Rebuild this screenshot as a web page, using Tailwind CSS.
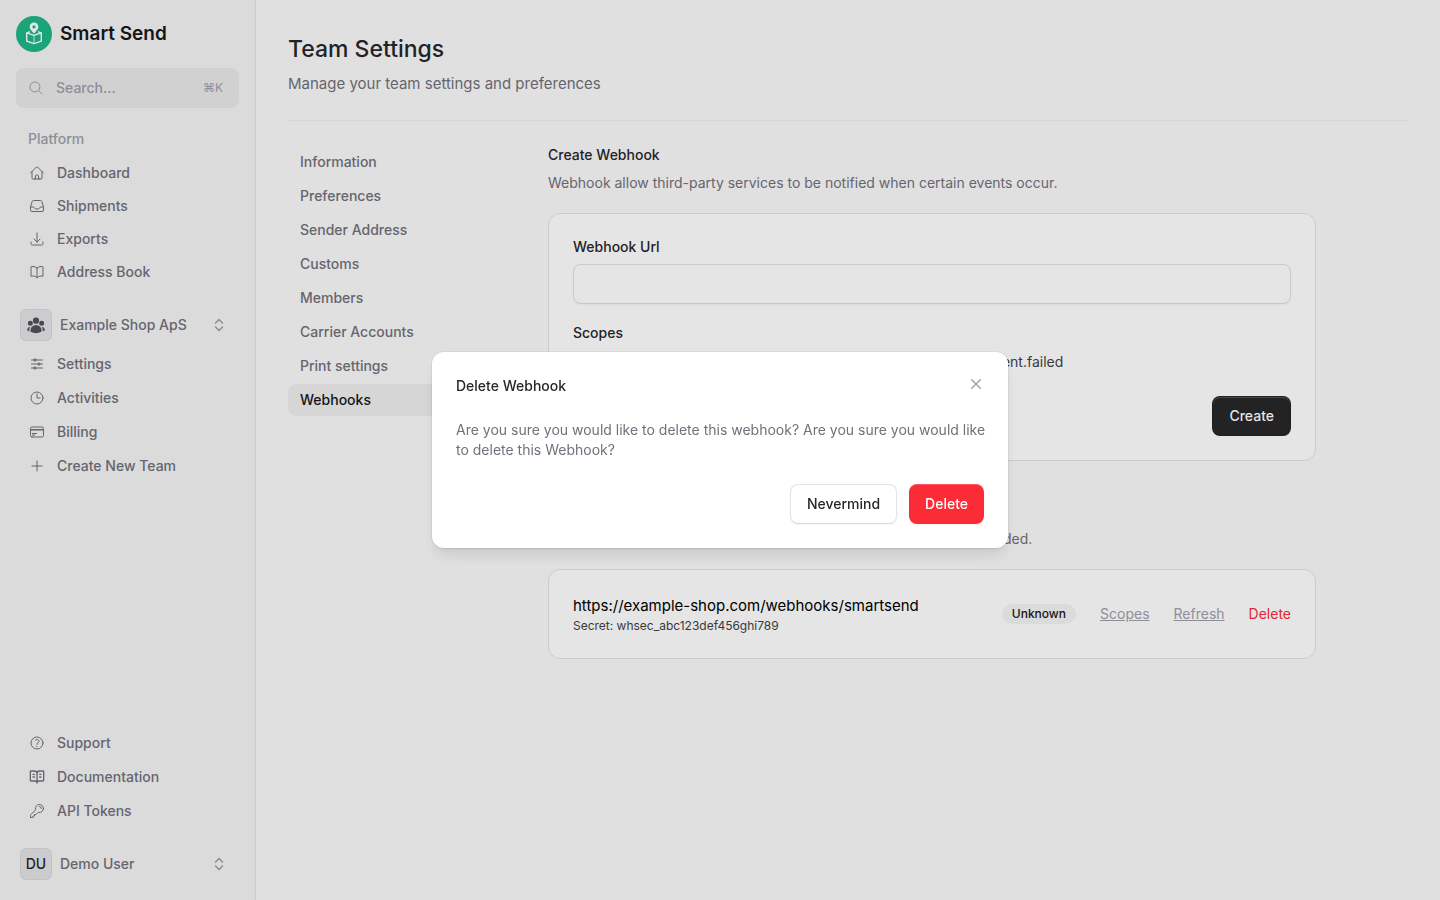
<!DOCTYPE html>
<html lang="en">
<head>
    <meta charset="UTF-8">
    <meta name="viewport" content="width=device-width, initial-scale=1.0">
    <title>Team Settings - Smart Send</title>
    <script src="https://cdn.jsdelivr.net/npm/@tailwindcss/browser@4"></script>
</head>
<body class="min-h-screen bg-[#fafafa] font-[Inter,sans-serif] text-sm text-zinc-800 antialiased">
    <div class="flex min-h-screen">

        <!-- Sidebar -->
        <aside class="flex w-64 shrink-0 flex-col gap-4 border-r border-zinc-200 bg-zinc-100 p-4">
            <a href="#" class="flex h-9 items-center gap-2">
                <svg class="size-9" viewBox="0 0 36 36" fill="none">
                    <circle cx="18" cy="18" r="18" fill="#1eb786"/>
                    <path d="M18 6.500a4.400 4.400 0 0 0-4.400 4.400c0 2.600 2.800 4.100 4.400 6.700 1.600-2.600 4.400-4.100 4.400-6.700A4.400 4.400 0 0 0 18 6.500zm0 2.800a1.600 1.600 0 1 1 0 3.200 1.600 1.600 0 0 1 0-3.200z" fill="#fff" fill-rule="evenodd"/>
                    <path d="M13.500 15.900l-2.800 1v8.300l7.300 2.400 7.300-2.400v-8.300l-2.800-1M10.700 16.900l7.300 2.500 7.300-2.500" stroke="#fff" stroke-width="1.400" stroke-linejoin="round" stroke-linecap="round"/>
                    <path d="M18 19.400v8.200" stroke="#fff" stroke-opacity=".8"/>
                </svg>
                <span class="text-[19px] font-semibold text-zinc-900">Smart Send</span>
            </a>

            <button type="button" class="flex h-10 w-full items-center rounded-lg bg-zinc-800/5 px-3 text-zinc-400">
                <svg class="size-4" viewBox="0 0 24 24" fill="none" stroke="currentColor" stroke-width="1.5" stroke-linecap="round" stroke-linejoin="round"><path d="m21 21-5.197-5.197m0 0A7.500 7.500 0 1 0 5.196 5.196a7.500 7.500 0 0 0 10.607 10.607Z"/></svg>
                <span class="ml-3 flex-1 text-left font-medium">Search...</span>
                <span class="mr-1 text-xs">⌘K</span>
            </button>

            <nav aria-label="Platform" class="pb-px">
                <div class="mb-[3px] flex h-[30px] items-center px-3 font-medium text-zinc-400">Platform</div>
                <div class="flex flex-col gap-px font-medium text-zinc-500">
                    <a href="#" class="flex h-8 items-center gap-3 px-[13px]">
                        <svg class="size-4" viewBox="0 0 24 24" fill="none" stroke="currentColor" stroke-width="1.5" stroke-linecap="round" stroke-linejoin="round"><path d="m2.250 12 8.954-8.955c.440-.439 1.152-.439 1.591 0L21.750 12M4.500 9.750v10.125c0 .621.504 1.125 1.125 1.125H9.750v-4.875c0-.621.504-1.125 1.125-1.125h2.250c.621 0 1.125.504 1.125 1.125V21h4.125c.621 0 1.125-.504 1.125-1.125V9.750M8.250 21h8.250"/></svg>
                        Dashboard
                    </a>
                    <a href="#" class="flex h-8 items-center gap-3 px-[13px]">
                        <svg class="size-4" viewBox="0 0 24 24" fill="none" stroke="currentColor" stroke-width="1.5" stroke-linecap="round" stroke-linejoin="round"><path d="M2.250 13.500h3.860a2.250 2.250 0 0 1 2.012 1.244l.256.512a2.250 2.250 0 0 0 2.013 1.244h3.218a2.250 2.250 0 0 0 2.013-1.244l.256-.512a2.250 2.250 0 0 1 2.013-1.244h3.859m-19.500.338V18a2.250 2.250 0 0 0 2.250 2.250h15A2.250 2.250 0 0 0 21.750 18v-4.162c0-.224-.034-.447-.100-.661L19.240 5.338a2.250 2.250 0 0 0-2.150-1.588H6.911a2.250 2.250 0 0 0-2.150 1.588L2.350 13.177a2.250 2.250 0 0 0-.100.661Z"/></svg>
                        Shipments
                    </a>
                    <a href="#" class="flex h-8 items-center gap-3 px-[13px]">
                        <svg class="size-4" viewBox="0 0 24 24" fill="none" stroke="currentColor" stroke-width="1.5" stroke-linecap="round" stroke-linejoin="round"><path d="M3 16.500v2.250A2.250 2.250 0 0 0 5.250 21h13.500A2.250 2.250 0 0 0 21 18.750V16.500M16.500 12 12 16.500m0 0L7.500 12m4.500 4.500V3"/></svg>
                        Exports
                    </a>
                    <a href="#" class="flex h-8 items-center gap-3 px-[13px]">
                        <svg class="size-4" viewBox="0 0 24 24" fill="none" stroke="currentColor" stroke-width="1.5" stroke-linecap="round" stroke-linejoin="round"><path d="M12 6.042A8.967 8.967 0 0 0 6 3.750c-1.052 0-2.062.180-3 .512v14.250A8.987 8.987 0 0 1 6 18c2.305 0 4.408.867 6 2.292m0-14.250a8.966 8.966 0 0 1 6-2.292c1.052 0 2.062.180 3 .512v14.250A8.987 8.987 0 0 0 18 18a8.967 8.967 0 0 0-6 2.292m0-14.250v14.250"/></svg>
                        Address Book
                    </a>
                </div>
            </nav>

            <div>
                <button type="button" class="mb-[3px] flex h-10 w-full items-center gap-2 p-1 font-medium text-zinc-500">
                    <span class="flex size-8 items-center justify-center rounded-md border border-zinc-300/70 bg-zinc-200 text-zinc-600">
                        <svg class="size-5" viewBox="0 0 24 24" fill="currentColor"><path d="M8.250 6.750a3.750 3.750 0 1 1 7.500 0 3.750 3.750 0 0 1-7.500 0ZM15.750 9.750a3 3 0 1 1 6 0 3 3 0 0 1-6 0ZM2.250 9.750a3 3 0 1 1 6 0 3 3 0 0 1-6 0ZM6.310 15.117A6.745 6.745 0 0 1 12 12a6.745 6.745 0 0 1 6.709 7.498.750.750 0 0 1-.372.568A12.696 12.696 0 0 1 12 21.750c-2.305 0-4.470-.612-6.337-1.684a.750.750 0 0 1-.372-.568 6.787 6.787 0 0 1 1.019-4.380Z"/><path d="M5.082 14.254a8.287 8.287 0 0 0-1.308 5.135 9.687 9.687 0 0 1-1.764-.440l-.115-.040a.563.563 0 0 1-.373-.487l-.010-.121a3.750 3.750 0 0 1 3.570-4.047ZM20.226 19.389a8.287 8.287 0 0 0-1.308-5.135 3.750 3.750 0 0 1 3.570 4.047l-.010.121a.563.563 0 0 1-.373.486l-.115.040c-.567.200-1.156.349-1.764.441Z"/></svg>
                    </span>
                    <span class="flex-1 text-left">Example Shop ApS</span>
                    <svg class="mr-2 size-4 text-zinc-400" viewBox="0 0 16 16" fill="none" stroke="currentColor" stroke-width="1.5" stroke-linecap="round" stroke-linejoin="round"><path d="M4.500 6 8 2.500 11.500 6M4.500 10 8 13.500l3.500-3.500"/></svg>
                </button>
                <nav aria-label="Team" class="flex flex-col gap-0.5 font-medium text-zinc-500">
                    <a href="#" class="flex h-8 items-center gap-3 px-[13px]">
                        <svg class="size-4" viewBox="0 0 24 24" fill="none" stroke="currentColor" stroke-width="1.8" stroke-linecap="round" stroke-linejoin="round"><path d="M10.500 6h9.750M10.500 6a1.500 1.500 0 1 1-3 0m3 0a1.500 1.500 0 1 0-3 0M3.750 6H7.500m3 12h9.750m-9.750 0a1.500 1.500 0 0 1-3 0m3 0a1.500 1.500 0 0 0-3 0m-3.750 0H7.500m9-6h3.750m-3.750 0a1.500 1.500 0 0 1-3 0m3 0a1.500 1.500 0 0 0-3 0m-9.750 0h9.750"/></svg>
                        Settings
                    </a>
                    <a href="#" class="flex h-8 items-center gap-3 px-[13px]">
                        <svg class="size-4" viewBox="0 0 24 24" fill="none" stroke="currentColor" stroke-width="1.5" stroke-linecap="round" stroke-linejoin="round"><path d="M12 6v6h4.500m4.500 0a9 9 0 1 1-18 0 9 9 0 0 1 18 0Z"/></svg>
                        Activities
                    </a>
                    <a href="#" class="flex h-8 items-center gap-3 px-[13px]">
                        <svg class="size-4" viewBox="0 0 24 24" fill="none" stroke="currentColor" stroke-width="1.5" stroke-linecap="round" stroke-linejoin="round"><path d="M2.250 8.250h19.500M2.250 9h19.500m-16.500 5.250h6m-6 2.250h3m-3.750 3h15a2.250 2.250 0 0 0 2.250-2.250V6.750A2.250 2.250 0 0 0 19.500 4.500h-15a2.250 2.250 0 0 0-2.250 2.250v10.500A2.250 2.250 0 0 0 4.500 19.500Z"/></svg>
                        Billing
                    </a>
                    <a href="#" class="flex h-8 items-center gap-3 px-[13px]">
                        <svg class="size-4" viewBox="0 0 24 24" fill="none" stroke="currentColor" stroke-width="1.5" stroke-linecap="round" stroke-linejoin="round"><path d="M12 4.500v15m7.500-7.500h-15"/></svg>
                        Create New Team
                    </a>
                </nav>
            </div>

            <nav aria-label="Help" class="mt-auto flex flex-col gap-0.5 pb-px font-medium text-zinc-500">
                <a href="#" class="flex h-8 items-center gap-3 px-[13px]">
                    <svg class="size-4" viewBox="0 0 24 24" fill="none" stroke="currentColor" stroke-width="1.5" stroke-linecap="round" stroke-linejoin="round"><path d="M9.879 7.519c1.171-1.025 3.071-1.025 4.242 0 1.172 1.025 1.172 2.687 0 3.712-.203.179-.430.326-.670.442-.745.361-1.450.999-1.450 1.827v.750M21 12a9 9 0 1 1-18 0 9 9 0 0 1 18 0Zm-9 5.250h.008v.008H12v-.008Z"/></svg>
                    Support
                </a>
                <a href="#" class="flex h-8 items-center gap-3 px-[13px]">
                    <svg class="size-4" viewBox="0 0 24 24" fill="none" stroke="currentColor" stroke-width="2" stroke-linecap="round" stroke-linejoin="round"><path d="M12 7v14M16 12h2M16 8h2M3 18a1 1 0 0 1-1-1V4a1 1 0 0 1 1-1h5a4 4 0 0 1 4 4 4 4 0 0 1 4-4h5a1 1 0 0 1 1 1v13a1 1 0 0 1-1 1h-6a3 3 0 0 0-3 3 3 3 0 0 0-3-3zM6 12h2M6 8h2"/></svg>
                    Documentation
                </a>
                <a href="#" class="flex h-8 items-center gap-3 px-[13px]">
                    <svg class="size-4" viewBox="0 0 24 24" fill="none" stroke="currentColor" stroke-width="1.5" stroke-linecap="round" stroke-linejoin="round"><path d="M15.750 5.250a3 3 0 0 1 3 3m3 0a6 6 0 0 1-7.029 5.912c-.563-.097-1.159.026-1.563.430L10.500 17.250H8.250v2.250H6v2.250H2.250v-2.818c0-.597.237-1.170.659-1.591l6.499-6.499c.404-.404.527-1 .430-1.563A6 6 0 1 1 21.750 8.250Z"/></svg>
                    API Tokens
                </a>
            </nav>

            <button type="button" class="flex h-10 w-full items-center gap-2 p-1 font-medium text-zinc-500">
                <span class="flex size-8 items-center justify-center rounded-md border border-zinc-300/70 bg-zinc-200 text-zinc-800">DU</span>
                <span class="flex-1 text-left">Demo User</span>
                <svg class="mr-2 size-4 text-zinc-400" viewBox="0 0 16 16" fill="none" stroke="currentColor" stroke-width="1.5" stroke-linecap="round" stroke-linejoin="round"><path d="M4.500 6 8 2.500 11.500 6M4.500 10 8 13.500l3.500-3.500"/></svg>
            </button>
        </aside>

        <!-- Main -->
        <main class="min-w-0 flex-1 p-8">
            <header class="border-b border-zinc-800/5 pb-6">
                <h1 class="text-[23px] leading-[34px] font-medium">Team Settings</h1>
                <p class="mt-1.5 text-[15px] leading-6 text-zinc-500">Manage your team settings and preferences</p>
            </header>

            <div class="flex gap-10 pt-6">
                <nav aria-label="Team settings" class="flex w-[220px] shrink-0 flex-col gap-0.5 pt-px font-medium text-zinc-500">
                    <a href="#" class="flex h-8 items-center px-3">Information</a>
                    <a href="#" class="flex h-8 items-center px-3">Preferences</a>
                    <a href="#" class="flex h-8 items-center px-3">Sender Address</a>
                    <a href="#" class="flex h-8 items-center px-3">Customs</a>
                    <a href="#" class="flex h-8 items-center px-3">Members</a>
                    <a href="#" class="flex h-8 items-center px-3">Carrier Accounts</a>
                    <a href="#" class="flex h-8 items-center px-3">Print settings</a>
                    <a href="#" aria-current="page" class="flex h-8 items-center rounded-lg bg-zinc-800/5 px-3 text-zinc-900">Webhooks</a>
                </nav>

                <div class="flex max-w-3xl flex-1 flex-col gap-10">
                    <section>
                        <h2 class="font-medium">Create Webhook</h2>
                        <p class="mt-2 text-zinc-500">Webhook allow third-party services to be notified when certain events occur.</p>

                        <form class="mt-5 rounded-xl border border-zinc-200 bg-white p-6">
                            <label for="url" class="mb-2 block leading-[18px] font-medium">Webhook Url</label>
                            <input type="url" id="url" class="block h-10 w-full rounded-lg border border-zinc-200 border-b-zinc-300/80 bg-white px-3 shadow-xs">

                            <fieldset class="mt-5">
                                <legend class="mb-2.5 leading-[18px] font-medium">Scopes</legend>
                                <div class="grid grid-cols-2 text-zinc-700">
                                    <label class="flex items-center gap-3"><input type="checkbox" class="size-[18px]"> shipment.created</label>
                                    <label class="flex items-center gap-3"><input type="checkbox" class="size-[18px]"> shipment.failed</label>
                                </div>
                            </fieldset>

                            <div class="mt-6 flex justify-end">
                                <button type="button" class="h-10 rounded-lg border border-black/10 bg-zinc-800 px-4 font-medium text-white inset-shadow-[0_1px_0_#ffffff33]">Create</button>
                            </div>
                        </form>
                    </section>

                    <section>
                        <h2 class="font-medium">Manage Webhooks</h2>
                        <p class="mt-2 text-zinc-500">You may delete all of the existing webhooks if they are no longer needed.</p>

                        <div class="mt-5 flex items-center justify-between rounded-xl border border-zinc-200 bg-white p-6">
                            <div>
                                <div class="text-[15px] leading-6 text-black">https://example-shop.com/webhooks/smartsend</div>
                                <div class="text-xs text-zinc-700">Secret: whsec_abc123def456ghi789</div>
                            </div>
                            <div class="flex items-center gap-6">
                                <span class="rounded-full bg-zinc-100 px-2.5 py-0.5 text-xs font-medium text-zinc-900">Unknown</span>
                                <button type="button" class="text-zinc-400 underline">Scopes</button>
                                <button type="button" class="text-zinc-400 underline">Refresh</button>
                                <button type="button" class="text-red-500">Delete</button>
                            </div>
                        </div>
                    </section>
                </div>
            </div>
        </main>
    </div>

    <!-- Delete webhook modal -->
    <div class="fixed inset-0 flex items-center justify-center bg-black/10">
        <div role="dialog" aria-modal="true" aria-labelledby="modal-title" class="relative w-full max-w-xl rounded-xl bg-white p-6 shadow-lg ring-1 ring-black/5">
            <h2 id="modal-title" class="font-medium">Delete Webhook</h2>
            <p class="mt-6 -mr-3 text-zinc-500">Are you sure you would like to delete this webhook? Are you sure you would like to delete this Webhook?</p>
            <div class="mt-6 flex justify-end gap-3">
                <button type="button" class="h-10 rounded-lg border border-zinc-200 border-b-zinc-300/80 bg-white px-4 font-medium shadow-xs">Nevermind</button>
                <button type="button" class="h-10 rounded-lg bg-red-500 px-4 font-medium text-white inset-shadow-[0_1px_0_#ffffff33] shadow-xs">Delete</button>
            </div>
            <button type="button" aria-label="Close" class="absolute top-4 right-4 flex size-8 items-center justify-center text-zinc-400">
                <svg class="size-5" viewBox="0 0 20 20" fill="currentColor"><path d="M6.280 5.220a.750.750 0 0 0-1.060 1.060L8.940 10l-3.720 3.720a.750.750 0 1 0 1.060 1.060L10 11.060l3.720 3.720a.750.750 0 1 0 1.060-1.060L11.060 10l3.720-3.720a.750.750 0 0 0-1.060-1.060L10 8.940 6.280 5.220Z"/></svg>
            </button>
        </div>
    </div>
</body>
</html>
